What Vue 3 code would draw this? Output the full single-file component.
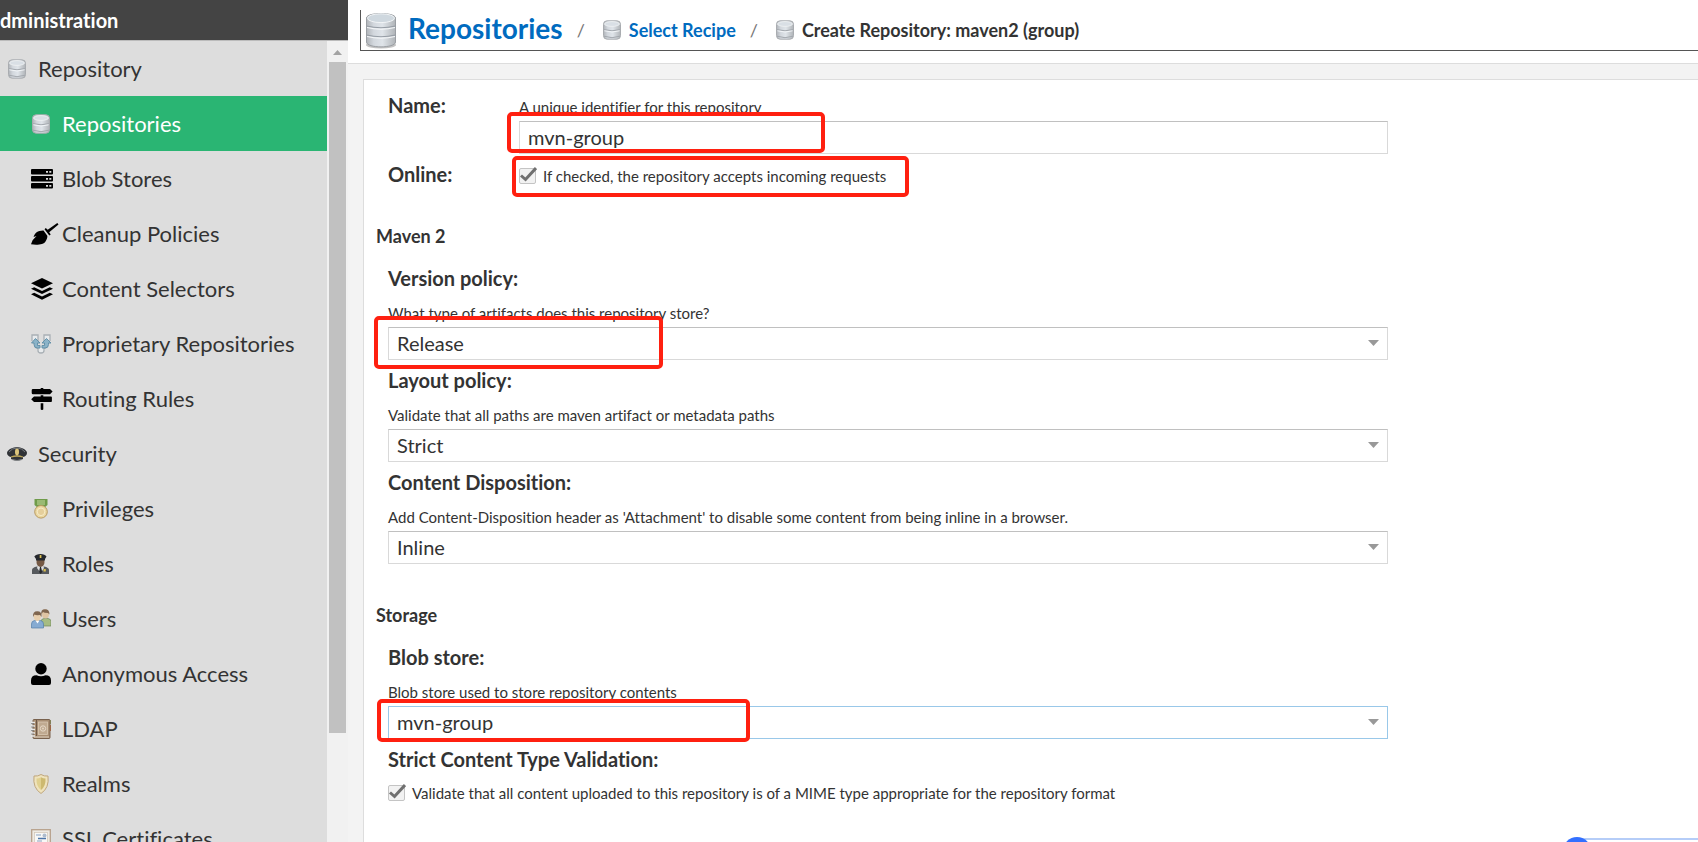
<script setup>
import { ref } from 'vue'

const menu = [
  { label: 'Repository', icon: 'database', group: true },
  { label: 'Repositories', icon: 'database', active: true },
  { label: 'Blob Stores', icon: 'server' },
  { label: 'Cleanup Policies', icon: 'broom' },
  { label: 'Content Selectors', icon: 'layers' },
  { label: 'Proprietary Repositories', icon: 'proprietary' },
  { label: 'Routing Rules', icon: 'signs' },
  { label: 'Security', icon: 'cap', group: true },
  { label: 'Privileges', icon: 'medal' },
  { label: 'Roles', icon: 'officer' },
  { label: 'Users', icon: 'users' },
  { label: 'Anonymous Access', icon: 'user' },
  { label: 'LDAP', icon: 'book' },
  { label: 'Realms', icon: 'shield' },
  { label: 'SSL Certificates', icon: 'certificate' }
]

const policies = [
  {
    id: 'version-policy',
    label: 'Version policy:',
    help: 'What type of artifacts does this repository store?',
    options: ['Release', 'Snapshot', 'Mixed'],
    mark: true
  },
  {
    id: 'layout-policy',
    label: 'Layout policy:',
    help: 'Validate that all paths are maven artifact or metadata paths',
    options: ['Strict', 'Permissive']
  },
  {
    id: 'content-disposition',
    label: 'Content Disposition:',
    help: "Add Content-Disposition header as 'Attachment' to disable some content from being inline in a browser.",
    options: ['Inline', 'Attachment']
  }
]

const form = ref({
  name: 'mvn-group',
  online: true,
  'version-policy': 'Release',
  'layout-policy': 'Strict',
  'content-disposition': 'Inline',
  blobStore: 'mvn-group',
  strict: true
})
</script>

<template>
  <svg class="defs" aria-hidden="true">
    <defs>
      <linearGradient id="metal" x1="0" x2="1" y1="0" y2="0">
        <stop offset="0" stop-color="#b0b4b9" />
        <stop offset="0.25" stop-color="#d3d8de" />
        <stop offset="0.55" stop-color="#dfe4e9" />
        <stop offset="1" stop-color="#b0b4b8" />
      </linearGradient>
      <symbol id="database" viewBox="0 0 20 20">
        <rect x="1.5" y="0.8" width="17" height="18.4" rx="3.6" fill="url(#metal)" stroke="#a9acb0" />
        <ellipse cx="10" cy="4" rx="7.5" ry="2.4" fill="#d9dfe5" stroke="#f0f2f4" stroke-width="0.8" />
        <path d="M2 9.6q8 2.4 16 0M2 16.2q8 3 16 0" fill="none" stroke="#a3a8ae" />
        <path d="M2.4 10.8q7.6 2.4 15.2 0" fill="none" stroke="#f2f5f8" />
      </symbol>
      <symbol id="database-large" viewBox="0 0 32 37">
        <ellipse cx="16" cy="33" rx="15" ry="3.5" fill="#c3c3c3" />
        <path d="M1.5 6C1.5 0 30.5 0 30.5 6V30C30.5 36.5 1.5 36.5 1.5 30Z" fill="url(#metal)" stroke="#9a9ea3" />
        <ellipse cx="16" cy="6.2" rx="13.5" ry="4.4" fill="#cfd8df" stroke="#f1f4f6" />
        <path d="M1.5 14q14.5 3.500 29 0M1.5 23q14.5 3.500 29 0" fill="none" stroke="#969da5" stroke-width="1.2" />
        <path d="M2 15.500q14 3.500 28 0M2 24.500q14 3.500 28 0" fill="none" stroke="#f5f7f9" stroke-width="1.2" />
      </symbol>
      <symbol id="server" viewBox="0 0 22 20">
        <path d="M1 0h20a1 1 0 0 1 1 1v3.500a1 1 0 0 1-1 1H1a1 1 0 0 1-1-1V1a1 1 0 0 1 1-1zM1 7h20a1 1 0 0 1 1 1v3.500a1 1 0 0 1-1 1H1a1 1 0 0 1-1-1V8a1 1 0 0 1 1-1zM1 14h20a1 1 0 0 1 1 1v3.500a1 1 0 0 1-1 1H1a1 1 0 0 1-1-1V15a1 1 0 0 1 1-1z" />
        <path d="M15 2h2v1.700h-2zM18.300 2h2v1.700h-2zM15 9h2v1.700h-2zM18.300 9h2v1.700h-2zM15 16h2v1.700h-2zM18.300 16h2v1.700h-2z" fill="#ddd" />
      </symbol>
      <symbol id="broom" viewBox="0 0 28 22">
        <path d="M27.500 1.500 26.300 0 16.700 6.700 14.800 5 13.500 6.300 18.300 12.600 19.700 11.500 18.200 9.200zM12.500 7.400C7 7.200 3.500 10 2.600 14L5.500 13 1.600 17.300 0 21.300C6 22.500 13 21.500 14.500 18.500C16 15.800 16.500 14.500 16.300 12.800z" />
      </symbol>
      <symbol id="layers" viewBox="0 0 22 22">
        <path d="M11 0 22 5.200 11 10.400 0 5.200zM0 10.700 3.200 9.200 11 12.900 18.800 9.200 22 10.700 11 16zM0 16.300 3.200 14.800 11 18.500 18.800 14.800 22 16.300 11 21.700z" />
      </symbol>
      <symbol id="proprietary" viewBox="0 0 20 20">
        <path d="M1 7V1h6v6M13 7V1h6v6M4 13q1 1.500 3 1.500v2q0 2.500 3 2.500t3-2.500v-2q2 0 3-1.500" fill="#e8ebed" stroke="#a9b0b5" stroke-width="1.300" />
        <path d="M4.500 4.500 9 9H6.500v2.500H9V14H6.500Q3 14 3 10.500V9H.5zM15.500 4.500 20 9h-2.500v1.500Q17.500 14 14 14h-3v-2.500h2.500V9H11z" fill="#8bb3c8" stroke="#5f8ca5" stroke-width="0.900" />
      </symbol>
      <symbol id="signs" viewBox="0 0 22 22">
        <path d="M9.700 0h2.600v1H19l2.600 2.500L19 6.300H2q-1.300 0-1.300-1.300V2.300Q.7 1 2 1h7.700zM9.700 7.300h2.600v1.300H20q.9 0 .9.900v3.700q0 .8-.9.800H3L.2 11.300 3 8.600h6.700zM9.700 15.300h2.600v5.900q0 .8-1.300.8t-1.300-.8z" />
      </symbol>
      <symbol id="cap" viewBox="0 0 20 16">
        <path d="M0 7Q0 4.500 4 2.500q6-3 12 0 4 2 4 4.500-.2 3-4 4v2q-6 3.500-12 0v-2Q.2 10 0 7z" fill="#303337" />
        <path d="M2 6Q5 2 10 2t8 4" fill="none" stroke="#777b80" />
        <path d="M4 11q6-2 12 0" fill="none" stroke="#bda75b" stroke-width="1.300" />
        <path d="M5 13.500q5 2 10 0" fill="none" stroke="#85888a" />
        <ellipse cx="10" cy="6" rx="2" ry="3.400" fill="#dcc57c" />
      </symbol>
      <symbol id="medal" viewBox="0 0 20 20">
        <path d="M3.500 0h13v6l-3 2.500h-7L3.500 6z" fill="#6f9b4a" />
        <path d="M6 1h8v5H6z" fill="#9aba74" />
        <circle cx="10" cy="12.800" r="6.300" fill="#ead7a0" stroke="#b99b63" />
        <circle cx="10" cy="12.800" r="3.800" fill="#e5cf9b" stroke="#f7ebc7" />
      </symbol>
      <symbol id="officer" viewBox="0 0 20 20">
        <path d="M1 20v-4q0-2.500 5-3.500h7q5 1 5 3.500v4z" fill="#56595d" />
        <path d="M7 11h5l1 3-3.300 5L6 14z" fill="#dedfe0" />
        <path d="m9 13 1 0 1.300 5-1.700 2-1.500-2z" fill="#26282b" />
        <ellipse cx="9.500" cy="8" rx="4" ry="5" fill="#755945" />
        <path d="M3.300 2.500Q5 .3 9.500 0q4.500.3 6 2.500L14 5v1.500H5V5z" fill="#25282d" />
        <path d="M8.700 1h1.700v3H8.700zM12.500 15h2.300v2.500h-2.300z" fill="#dabf51" />
      </symbol>
      <symbol id="users" viewBox="0 0 20 20">
        <path d="M10 15v-2.500q0-2.500 3-3h4q3 .5 3 3V17h-9z" fill="#a6bc83" stroke="#71885d" stroke-width="0.700" />
        <ellipse cx="14.500" cy="5" rx="3.500" ry="4.500" fill="#dfc4a3" />
        <path d="M10.300 5.500Q9.500.2 14 .2t4.500 5.300L17 4q-4 0-5-1z" fill="#80664f" />
        <path d="M.5 19v-4q0-3 3-3.500h6q3 .5 3 3.500v4z" fill="#86abd2" stroke="#557fa9" stroke-width="0.700" />
        <path d="M4.500 11.500h4l-2 3z" fill="#fff" />
        <ellipse cx="6.300" cy="7.500" rx="3.600" ry="4.600" fill="#e8cfae" />
        <path d="M2 8Q1.500 2.200 6.300 2.200T10.600 8L9 6Q5 6.500 3.500 5.500z" fill="#80664f" />
      </symbol>
      <symbol id="user" viewBox="0 0 20 22">
        <circle cx="10" cy="5.700" r="5.700" />
        <path d="M5.500 12.200q4.500 2 9 0Q20 12.200 20 17.500V20q0 2-2 2H2q-2 0-2-2v-2.500q0-5.300 5.500-5.300z" />
      </symbol>
      <symbol id="book" viewBox="0 0 20 20">
        <path d="M18 1h2v4h-2z" fill="#8fa064" />
        <path d="M18 6h2v6h-2z" fill="#c46b3f" />
        <rect x="2" y="0.500" width="17" height="19" rx="1" fill="#a88e73" stroke="#78614d" />
        <path d="M5.500 1v16" stroke="#6d5746" />
        <rect x="7.500" y="3" width="9" height="12.500" fill="#c0aa91" stroke="#dac9b4" stroke-width="0.800" />
        <circle cx="12" cy="9.500" r="2.700" fill="none" stroke="#e6d9c8" />
        <circle cx="12" cy="9.500" r="0.900" fill="#e6d9c8" />
        <path d="M0 3.500h4M0 7h4M0 10.500h4M0 14h4M0 17h4" stroke="#e9e9e9" stroke-width="1.300" />
        <path d="M0 4.500h3M0 8h3M0 11.500h3M0 15h3" stroke="#777" stroke-width="0.700" />
        <path d="M3 18h15" stroke="#ddd1c2" />
      </symbol>
      <symbol id="shield" viewBox="0 0 20 20">
        <path d="M10 .5q3 2 7 1.500 1.500 12-7 17.500Q1.500 14 3 2q4 .5 7-1.500z" fill="#efe3bd" stroke="#bfa67c" />
        <path d="M10 3.300q2 1.200 4.500 1.200.5 7.500-4.500 11.500z" fill="#cdb96f" />
        <path d="M10 3.300Q8 4.500 5.500 4.500 5 12 10 16z" fill="#e0d08f" />
      </symbol>
      <symbol id="certificate" viewBox="0 0 20 20">
        <rect x="0.700" y="0.700" width="18.600" height="17" fill="#eeebe4" stroke="#b7a18c" stroke-width="1.300" />
        <rect x="3.500" y="3.500" width="13" height="11" fill="#f8f8f6" stroke="#d0c5b5" stroke-width="0.700" />
        <path d="M5 6h5M6 12h5" stroke="#8aa2c1" />
        <path d="M7 9.500h8" stroke="#4e76a9" stroke-width="1.500" />
        <circle cx="13.500" cy="6.500" r="2" fill="#aebccd" />
      </symbol>
    </defs>
  </svg>

  <div class="page">
    <aside class="sidebar">
      <h2 class="sidebar-title">dministration</h2>
      <div class="sidebar-body">
        <nav class="menu">
          <a
            v-for="item in menu"
            :key="item.label"
            href="#"
            class="menu-item"
            :class="{ group: item.group, active: item.active }"
          >
            <svg class="menu-icon" :class="item.icon"><use :href="'#' + item.icon" /></svg>
            <span>{{ item.label }}</span>
          </a>
        </nav>
        <div class="scrollbar">
          <svg class="scroll-up" viewBox="0 0 9 5"><path d="M0 5 4.500 0 9 5z" fill="#a3a3a3" /></svg>
          <div class="scroll-track"><div class="thumb"></div></div>
        </div>
      </div>
    </aside>

    <main class="content">
      <header class="header">
        <div class="breadcrumb">
          <svg class="crumb-large"><use href="#database-large" /></svg>
          <a href="#" class="crumb-title">Repositories</a>
          <span class="slash">/</span>
          <svg class="crumb-icon"><use href="#database" /></svg>
          <a href="#" class="crumb">Select Recipe</a>
          <span class="slash">/</span>
          <svg class="crumb-icon"><use href="#database" /></svg>
          <span class="crumb current">Create Repository: maven2 (group)</span>
        </div>
      </header>

      <form class="panel" @submit.prevent>
        <div class="row">
          <label class="label" for="name">Name:</label>
          <div class="row-field marked">
            <p class="help">A unique identifier for this repository</p>
            <input id="name" v-model="form.name" class="control" type="text" />
            <i class="mark mark-name"></i>
          </div>
        </div>
        <div class="row row-online">
          <label class="label" for="online">Online:</label>
          <label class="check marked">
            <span class="box">
              <input id="online" v-model="form.online" type="checkbox" />
              <svg v-if="form.online" class="tick" viewBox="0 0 18 16"><path d="M2 8.500 6.500 12.500 17 1" /></svg>
            </span>
            If checked, the repository accepts incoming requests
            <i class="mark mark-online"></i>
          </label>
        </div>

        <h3 class="section">Maven 2</h3>
        <div v-for="p in policies" :key="p.id" class="field marked">
          <label class="label" :for="p.id">{{ p.label }}</label>
          <p class="help">{{ p.help }}</p>
          <div class="select">
            <select :id="p.id" v-model="form[p.id]" class="control">
              <option v-for="o in p.options" :key="o">{{ o }}</option>
            </select>
            <svg class="arrow" viewBox="0 0 11 6"><path d="M0 0h11L5.500 6z" /></svg>
          </div>
          <i v-if="p.mark" class="mark mark-version"></i>
        </div>

        <h3 class="section section-storage">Storage</h3>
        <div class="field marked">
          <label class="label" for="blob-store">Blob store:</label>
          <p class="help">Blob store used to store repository contents</p>
          <div class="select">
            <select id="blob-store" v-model="form.blobStore" class="control focused">
              <option>mvn-group</option>
              <option>default</option>
            </select>
            <svg class="arrow" viewBox="0 0 11 6"><path d="M0 0h11L5.500 6z" /></svg>
          </div>
          <i class="mark mark-blob"></i>
        </div>
        <div class="field">
          <label class="label" for="strict">Strict Content Type Validation:</label>
          <label class="check check-strict">
            <span class="box">
              <input id="strict" v-model="form.strict" type="checkbox" />
              <svg v-if="form.strict" class="tick" viewBox="0 0 18 16"><path d="M2 8.500 6.500 12.500 17 1" /></svg>
            </span>
            Validate that all content uploaded to this repository is of a MIME type appropriate for the repository format
          </label>
        </div>
      </form>
    </main>

    <div class="floating"><span class="bubble"></span></div>
  </div>
</template>

<style scoped>
.defs {
  position: absolute;
  width: 0;
  height: 0;
}

.page {
  position: relative;
  display: flex;
  height: 100vh;
  overflow: hidden;
  background-color: #f3f3f3;
}

.sidebar {
  display: flex;
  flex-direction: column;
  flex: 0 0 348px;
}

.sidebar-title {
  margin: 0;
  background-color: #444;
  border-bottom: 1px solid #bbb;
  color: white;
  font-size: 20px;
  line-height: 40px;
}

.sidebar-body {
  display: flex;
  flex: 1;
  min-height: 0;
}

.menu {
  flex: 1;
  overflow: hidden;
  background-color: #ddd;
}

.menu-item {
  display: flex;
  align-items: center;
  height: 55px;
  padding-left: 62px;
  color: #333;
  font-size: 22px;
  text-decoration: none;
}

.menu-item.group {
  padding-left: 38px;
}

.menu-item.active {
  background-color: #2ab573;
  color: white;
}

.menu-icon {
  flex: none;
  width: 20px;
  height: 20px;
  margin-left: -31px;
  margin-right: 11px;
}

.menu-icon.server,
.menu-icon.layers,
.menu-icon.signs {
  width: 22px;
  height: 22px;
  margin-right: 9px;
}

.menu-icon.user {
  height: 22px;
}

.menu-icon.broom {
  width: 28px;
  height: 22px;
  margin-right: 3px;
}

.scrollbar {
  display: flex;
  flex-direction: column;
  align-items: center;
  width: 21px;
  background-color: #f1f1f1;
}

.scroll-up {
  width: 9px;
  height: 5px;
  margin: 9px 0 7px;
}

.scroll-track {
  flex: 1;
}

.thumb {
  width: 17px;
  height: 86%;
  background-color: #c1c1c1;
}

.content {
  display: flex;
  flex-direction: column;
  flex: 1;
  min-width: 0;
}

.header {
  padding: 10px 0 12px 12px;
  background-color: white;
  border-bottom: 1px solid #ddd;
}

.breadcrumb {
  display: flex;
  align-items: center;
  height: 40px;
  border-left: 1px solid #555;
  border-bottom: 1px solid #555;
  white-space: nowrap;
}

.crumb-large {
  width: 32px;
  height: 37px;
  margin: 0 11px 0 4px;
}

.crumb-title {
  padding-bottom: 4px;
  color: #006bbf;
  font-size: 28px;
  font-weight: bold;
  line-height: 36px;
  text-decoration: none;
}

.slash {
  margin: 0 17px 0 14px;
  color: #777;
  font-size: 18px;
}

.crumb-icon {
  width: 20px;
  height: 20px;
  margin-right: 7px;
}

.crumb {
  color: #006bbf;
  font-size: 18px;
  font-weight: bold;
  text-decoration: none;
}

.crumb.current {
  color: #333;
}

.panel {
  flex: 1;
  margin: 15px 0 0 15px;
  padding: 13px 0 0 24px;
  background-color: white;
  border: 1px solid #ddd;
  border-right: 0;
  border-bottom: 0;
}

.row,
.field {
  max-width: 1000px;
}

.row {
  display: flex;
}

.row .label {
  width: 131px;
}

.row-field {
  flex: 1;
  padding-top: 5px;
}

.row-online {
  margin-top: 8px;
}

.field {
  margin-bottom: 8px;
}

.label {
  display: block;
  font-size: 20px;
  font-weight: bold;
  line-height: 24px;
}

.help {
  margin: 0 0 5px;
  font-size: 15px;
  line-height: 18px;
}

.field .help {
  margin-top: 14px;
}

.section {
  margin: 36px 0 20px -12px;
  font-size: 18px;
  line-height: 20px;
}

.section-storage {
  margin-top: 41px;
}

.control {
  display: block;
  box-sizing: border-box;
  width: 100%;
  height: 33px;
  padding: 0 8px 2px;
  appearance: none;
  background-color: white;
  border: 1px solid #d9d9d9;
  border-top-color: #c0c0c0;
  border-radius: 0;
  outline: none;
  color: #333;
  font-family: inherit;
  font-size: 20px;
}

.control.focused {
  border-color: #99c8e9;
}

.select {
  position: relative;
}

.arrow {
  position: absolute;
  top: 13px;
  right: 9px;
  width: 11px;
  height: 6px;
  fill: #999;
  pointer-events: none;
}

.check {
  display: flex;
  align-items: center;
  gap: 7px;
  height: 28px;
  font-size: 15px;
  white-space: nowrap;
}

.check-strict {
  margin-top: 8px;
}

.box {
  position: relative;
  width: 17px;
  height: 16px;
}

.box input {
  display: block;
  box-sizing: border-box;
  width: 17px;
  height: 16px;
  margin: 0;
  appearance: none;
  background-color: #f2f2f2;
  border: 1px solid #c4c4c4;
  border-radius: 2px;
}

.tick {
  position: absolute;
  top: -1px;
  left: 0;
  width: 18px;
  height: 16px;
  fill: none;
  stroke: #707070;
  stroke-width: 3px;
  pointer-events: none;
}

.marked {
  position: relative;
}

/* red highlight frames drawn over the fields */
.mark {
  position: absolute;
  border: 4px solid #ff2010;
  border-radius: 5px;
  pointer-events: none;
}

.mark-name {
  top: 19px;
  left: -12px;
  width: 310px;
  height: 33px;
}

.mark-online {
  top: -6px;
  left: -7px;
  width: 389px;
  height: 33px;
}

.mark-version {
  top: 50px;
  left: -14px;
  width: 281px;
  height: 45px;
}

.mark-blob {
  top: 54px;
  left: -11px;
  width: 365px;
  height: 35px;
}

.floating {
  position: absolute;
  right: 0;
  bottom: 0;
  width: 121px;
  height: 2px;
  border-top: 2px solid #b5cdf8;
  background-color: white;
}

.bubble {
  position: absolute;
  top: -3px;
  left: -14px;
  width: 28px;
  height: 28px;
  border-radius: 14px;
  background-color: #3370ff;
}
</style>

<style>
body {
  margin: 0;
  color: #333;
  font-family: Lato, "Open Sans", sans-serif;
  font-variant-ligatures: none;
}
</style>
